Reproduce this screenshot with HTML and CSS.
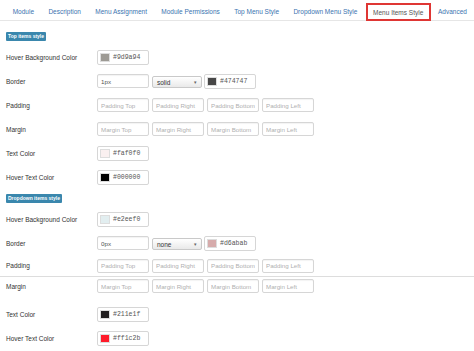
FILE: index.html
```html
<!DOCTYPE html>
<html lang="en">
<head>
    <meta charset="UTF-8">
    <meta name="viewport" content="width=device-width, initial-scale=1.0">
    <title>Menu Items Style</title>
    <link rel="stylesheet" href="styles.css">
</head>
<body>

<ul class="tabs">
    <li><a href="#">Module</a></li>
    <li><a href="#">Description</a></li>
    <li><a href="#">Menu Assignment</a></li>
    <li><a href="#">Module Permissions</a></li>
    <li><a href="#">Top Menu Style</a></li>
    <li><a href="#">Dropdown Menu Style</a></li>
    <li class="active"><a href="#">Menu Items Style</a></li>
    <li><a href="#">Advanced</a></li>
</ul>

<div class="pane">
    <span class="badge first">Top items style</span>

    <div class="row">
        <label>Hover Background Color</label>
        <div class="color-field"><span class="swatch" style="background:#9d9a94"></span><span class="hex">#9d9a94</span></div>
    </div>
    <div class="row">
        <label>Border</label>
        <input type="text" value="1px">
        <div class="select">solid<span class="caret">▾</span></div>
        <div class="color-field"><span class="swatch" style="background:#474747"></span><span class="hex">#474747</span></div>
    </div>
    <div class="row">
        <label>Padding</label>
        <input type="text" placeholder="Padding Top">
        <input type="text" placeholder="Padding Right">
        <input type="text" placeholder="Padding Bottom">
        <input type="text" placeholder="Padding Left">
    </div>
    <div class="row">
        <label>Margin</label>
        <input type="text" placeholder="Margin Top">
        <input type="text" placeholder="Margin Right">
        <input type="text" placeholder="Margin Bottom">
        <input type="text" placeholder="Margin Left">
    </div>
    <div class="row">
        <label>Text Color</label>
        <div class="color-field"><span class="swatch" style="background:#faf0f0"></span><span class="hex">#faf0f0</span></div>
    </div>
    <div class="row">
        <label>Hover Text Color</label>
        <div class="color-field"><span class="swatch" style="background:#000000"></span><span class="hex">#000000</span></div>
    </div>

    <span class="badge">Dropdown items style</span>

    <div class="row">
        <label>Hover Background Color</label>
        <div class="color-field"><span class="swatch" style="background:#e2eef0"></span><span class="hex">#e2eef0</span></div>
    </div>
    <div class="row">
        <label>Border</label>
        <input type="text" value="0px">
        <div class="select">none<span class="caret">▾</span></div>
        <div class="color-field"><span class="swatch" style="background:#d6abab"></span><span class="hex">#d6abab</span></div>
    </div>
    <div class="row short">
        <label>Padding</label>
        <input type="text" placeholder="Padding Top">
        <input type="text" placeholder="Padding Right">
        <input type="text" placeholder="Padding Bottom">
        <input type="text" placeholder="Padding Left">
    </div>
    <div class="divider"></div>
    <div class="row tight">
        <label>Margin</label>
        <input type="text" placeholder="Margin Top">
        <input type="text" placeholder="Margin Right">
        <input type="text" placeholder="Margin Bottom">
        <input type="text" placeholder="Margin Left">
    </div>
    <div class="row">
        <label>Text Color</label>
        <div class="color-field"><span class="swatch" style="background:#211e1f"></span><span class="hex">#211e1f</span></div>
    </div>
    <div class="row">
        <label>Hover Text Color</label>
        <div class="color-field"><span class="swatch" style="background:#ff1c2b"></span><span class="hex">#ff1c2b</span></div>
    </div>
</div>

</body>
</html>
```

FILE: styles.css
```css
body {
    margin: 0;
    font-family: "Liberation Sans", Arial, sans-serif;
    font-size: 6.5px;
    color: #333;
    background-color: #fff;
}
.tabs {
    display: flex;
    list-style: none;
    margin: 0;
    padding: 3px 0 0 5.5px;
    height: 17px;
    border-bottom: 1px solid #e6e6e6;
    white-space: nowrap;
}
.tabs li {
    flex: none;
    display: flex;
    align-items: center;
    padding: 0 7.2px;
    border: 2px solid transparent;
    margin: 0 -2px;
}
.tabs a {
    color: #3b73af;
    text-decoration: none;
}
.tabs li.active {
    border-color: #df3634;
    height: 14px;
    padding: 0 5.5px;
    margin: 0 0 0 1px;
}
.tabs li.active a {
    color: #555;
}
.pane {
    padding: 0 0 0 6px;
}
.badge {
    display: inline-block;
    margin-top: 5px;
    margin-bottom: 4px;
    height: 9px;
    line-height: 9px;
    padding: 0 2px;
    background-color: #3a87ad;
    color: #fff;
    font-size: 5px;
    font-weight: bold;
    border-radius: 1px;
}
.badge.first {
    margin-top: 11px;
}
.row {
    display: flex;
    align-items: center;
    height: 24px;
}
.row.short {
    height: 21px;
}
.row.tight {
    height: 18px;
    margin-bottom: 7px;
}
.row label {
    width: 91px;
    flex: none;
}
.row input {
    box-sizing: border-box;
    width: 52px;
    height: 14px;
    margin: 0 3px 0 0;
    padding: 0 3px;
    border: 1px solid #d6d6d6;
    border-radius: 2px;
    font-family: inherit;
    font-size: 6.2px;
    color: #555;
    box-shadow: inset 0 1px 1px rgba(0, 0, 0, 0.05);
}
.row input::placeholder {
    color: #b0b0b0;
}
.select {
    box-sizing: border-box;
    display: flex;
    align-items: center;
    justify-content: space-between;
    width: 50px;
    height: 12px;
    margin: 2px 2px 0 0;
    padding: 0 4px;
    border: 1px solid #c9c9c9;
    border-radius: 2px;
    background: linear-gradient(#fff, #e9e9e9);
    font-size: 6.5px;
    color: #333;
}
.caret {
    font-size: 5px;
    color: #666;
}
.color-field {
    box-sizing: border-box;
    display: flex;
    align-items: center;
    width: 52px;
    height: 15px;
    padding: 0 2px;
    border: 1px solid #d6d6d6;
    border-radius: 2px;
}
.swatch {
    width: 10px;
    height: 9px;
    margin-right: 3px;
    border: 1px solid #ddd;
    box-sizing: border-box;
}
.hex {
    font-family: "Liberation Mono", "Courier New", monospace;
    font-size: 6.5px;
    color: #555;
}
.divider {
    height: 1px;
    margin-left: -6px;
    background-color: #ddd;
}
```
